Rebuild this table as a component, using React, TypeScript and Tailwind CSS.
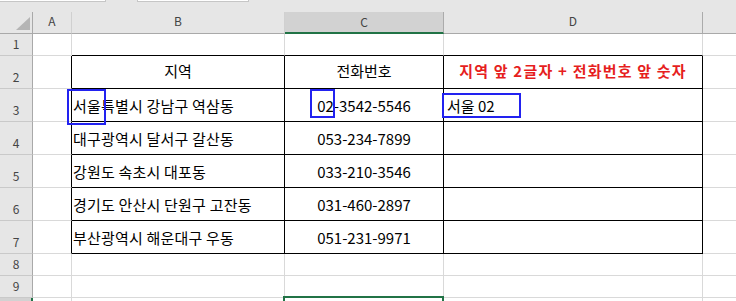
import type { ReactNode } from "react"

type Row = {
  n: number
  h: string
  b?: string
  c?: string
  d?: string
}

const rows: Row[] = [
  { n: 1, h: "h-[22px]" },
  { n: 2, h: "h-[33px]", b: "지역", c: "전화번호", d: "지역 앞 2글자 + 전화번호 앞 숫자" },
  { n: 3, h: "h-[33px]", b: "서울특별시 강남구 역삼동", c: "02-3542-5546", d: "서울 02" },
  { n: 4, h: "h-[33px]", b: "대구광역시 달서구 갈산동", c: "053-234-7899" },
  { n: 5, h: "h-[33px]", b: "강원도 속초시 대포동", c: "033-210-3546" },
  { n: 6, h: "h-[33px]", b: "경기도 안산시 단원구 고잔동", c: "031-460-2897" },
  { n: 7, h: "h-[33px]", b: "부산광역시 해운대구 우동", c: "051-231-9971" },
  { n: 8, h: "h-[22px]" },
  { n: 9, h: "h-[22px]" },
  { n: 10, h: "h-[22px]" },
]

const cols = "grid grid-cols-[33px_39px_213px_159px_259px_1fr]"

// blue marker box drawn over a cell
function Mark({ className }: { className: string }) {
  return <div className={`absolute border-2 border-[#2222f0] pointer-events-none z-10 ${className}`} />
}

function Cell({ className, children }: { className: string; children?: ReactNode }) {
  return <div className={`relative flex items-center border-r border-b ${className}`}>{children}</div>
}

export default function App() {
  return (
    <div className="w-[736px] h-[301px] overflow-hidden bg-white font-['Noto_Sans_CJK_KR',sans-serif] text-[#000]">
      {/* formula bar leftovers */}
      <div className="h-[12px] bg-[#e6e6e6] flex items-start">
        <div className="w-[106px] h-[2px] bg-white border-b border-r border-[#c6c6c6]" />
        <div className="w-[31px]" />
        <div className="w-[112px] h-[2px] bg-white border-b border-x border-[#c6c6c6]" />
      </div>

      {/* column headers */}
      <div className={`${cols} h-[22px] text-[12px] text-[#444]`}>
        <div className="relative bg-[#e6e6e6] border-r border-b border-[#a9a9a9]">
          <svg className="absolute left-0 top-0" width="33" height="22" viewBox="0 0 33 22">
            <polygon points="16,18 30,18 30,5" fill="#b5b5b5" />
          </svg>
        </div>
        <div className="flex items-center justify-center pb-[3px] bg-[#e6e6e6] border-r border-[#d0d0d0] border-b border-b-[#a9a9a9]">A</div>
        <div className="flex items-center justify-center pb-[3px] bg-[#e6e6e6] border-r border-[#d0d0d0] border-b border-b-[#a9a9a9]">B</div>
        <div className="flex items-center justify-center pb-[1px] bg-[#d2d2d2] border-r border-[#ababab] border-b-2 border-b-[#217346]">C</div>
        <div className="flex items-center justify-center pb-[3px] bg-[#e6e6e6] border-r border-[#ababab] border-b border-b-[#a9a9a9]">D</div>
        <div className="bg-[#e6e6e6] border-b border-[#a9a9a9]" />
      </div>

      {rows.map((r) => {
        const inTable = r.n >= 2 && r.n <= 7
        const topEdge = r.n >= 1 && r.n <= 7
        const right = inTable ? "border-r-black" : "border-r-[#d9d9d9]"
        const bottom = topEdge ? "border-b-black" : "border-b-[#d9d9d9]"
        const head = r.n === 2
        return (
          <div key={r.n} className={`${cols} ${r.h}`}>
            {r.n === 10 ? (
              <div className="bg-[#d2d2d2] border-r-2 border-[#217346]" />
            ) : (
              <div className="flex items-end justify-center pb-[5px] bg-[#e6e6e6] border-r border-r-[#a9a9a9] border-b border-b-[#c9c9c9] text-[12px] leading-none text-[#444]">
                {r.n}
              </div>
            )}
            <Cell className={`border-b-[#d9d9d9] ${right}`} />
            <Cell className={`${right} ${bottom} ${head ? "justify-center pb-[4px]" : "pl-[1px] tracking-[0.2px]"} text-[15px] leading-none`}>
              {r.n === 3 && <Mark className="-left-[5px] top-0 w-[39px] h-[36px]" />}
              {r.b}
            </Cell>
            <Cell className={`${right} ${bottom} justify-center ${head ? "pb-[4px]" : ""} text-[15px] leading-none`}>
              {r.n === 3 && <Mark className="left-[25px] top-0 w-[25px] h-[29px]" />}
              {r.n === 10 && <div className="absolute -left-[2px] -top-[2px] w-[161px] h-[25px] border-2 border-[#217346]" />}
              {r.c}
            </Cell>
            <Cell
              className={`${right} ${bottom} ${head ? "justify-center pb-[4px] font-bold tracking-[1.2px] text-[#e61e1e]" : "pl-[3px]"} text-[15px] leading-none`}
            >
              {r.n === 3 && <Mark className="-left-[2px] top-[4px] w-[79px] h-[25px]" />}
              {r.d}
            </Cell>
            <div className="border-b border-[#d9d9d9]" />
          </div>
        )
      })}
    </div>
  )
}
